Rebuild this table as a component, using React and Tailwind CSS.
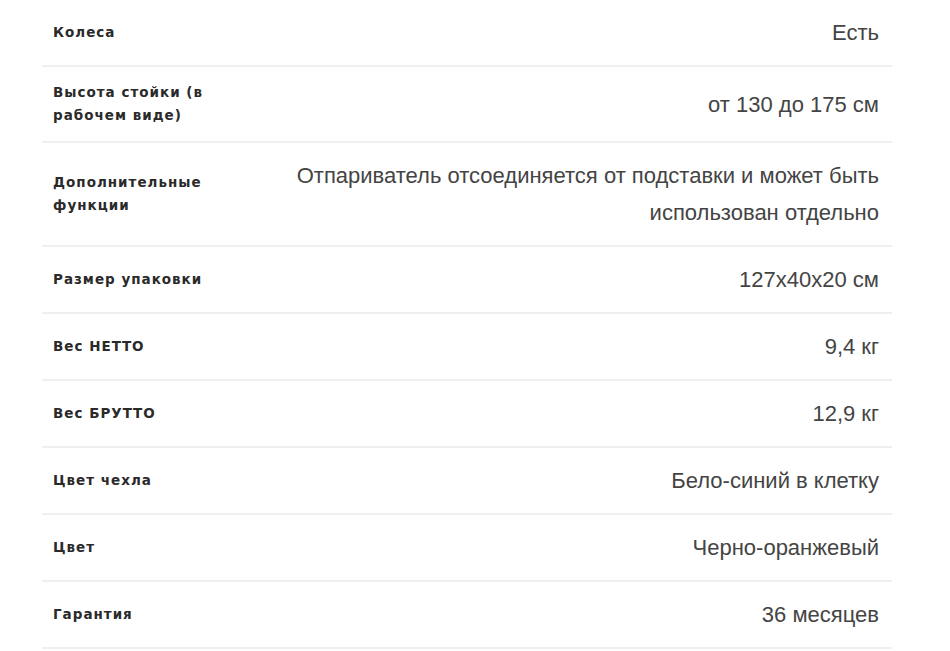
const specs = [
  { label: "Колеса", value: "Есть" },
  { label: "Высота стойки (в рабочем виде)", value: "от 130 до 175 см" },
  {
    label: "Дополнительные функции",
    value: "Отпариватель отсоединяется от подставки и может быть использован отдельно",
  },
  { label: "Размер упаковки", value: "127x40x20 см" },
  { label: "Вес НЕТТО", value: "9,4 кг" },
  { label: "Вес БРУТТО", value: "12,9 кг" },
  { label: "Цвет чехла", value: "Бело-синий в клетку" },
  { label: "Цвет", value: "Черно-оранжевый" },
  { label: "Гарантия", value: "36 месяцев" },
];

export default function App() {
  return (
    <div className="min-h-screen bg-white">
      <div className="ml-[42px] w-[850px]">
        {specs.map((row) => (
          <div
            key={row.label}
            className="flex items-center border-b-2 border-[#efefef] py-[14px]"
          >
            <div className="w-[240px] shrink-0 pl-[11px] pr-[60px] font-['DejaVu_Sans',sans-serif] text-[13.5px] font-bold leading-[23px] tracking-[1px] text-[#2a2a2a]">
              {row.label}
            </div>
            <div className="flex-1 pr-[13px] text-right font-['Liberation_Sans',Arial,sans-serif] text-[22px] leading-[37px] text-[#444]">
              {row.value}
            </div>
          </div>
        ))}
      </div>
    </div>
  );
}
